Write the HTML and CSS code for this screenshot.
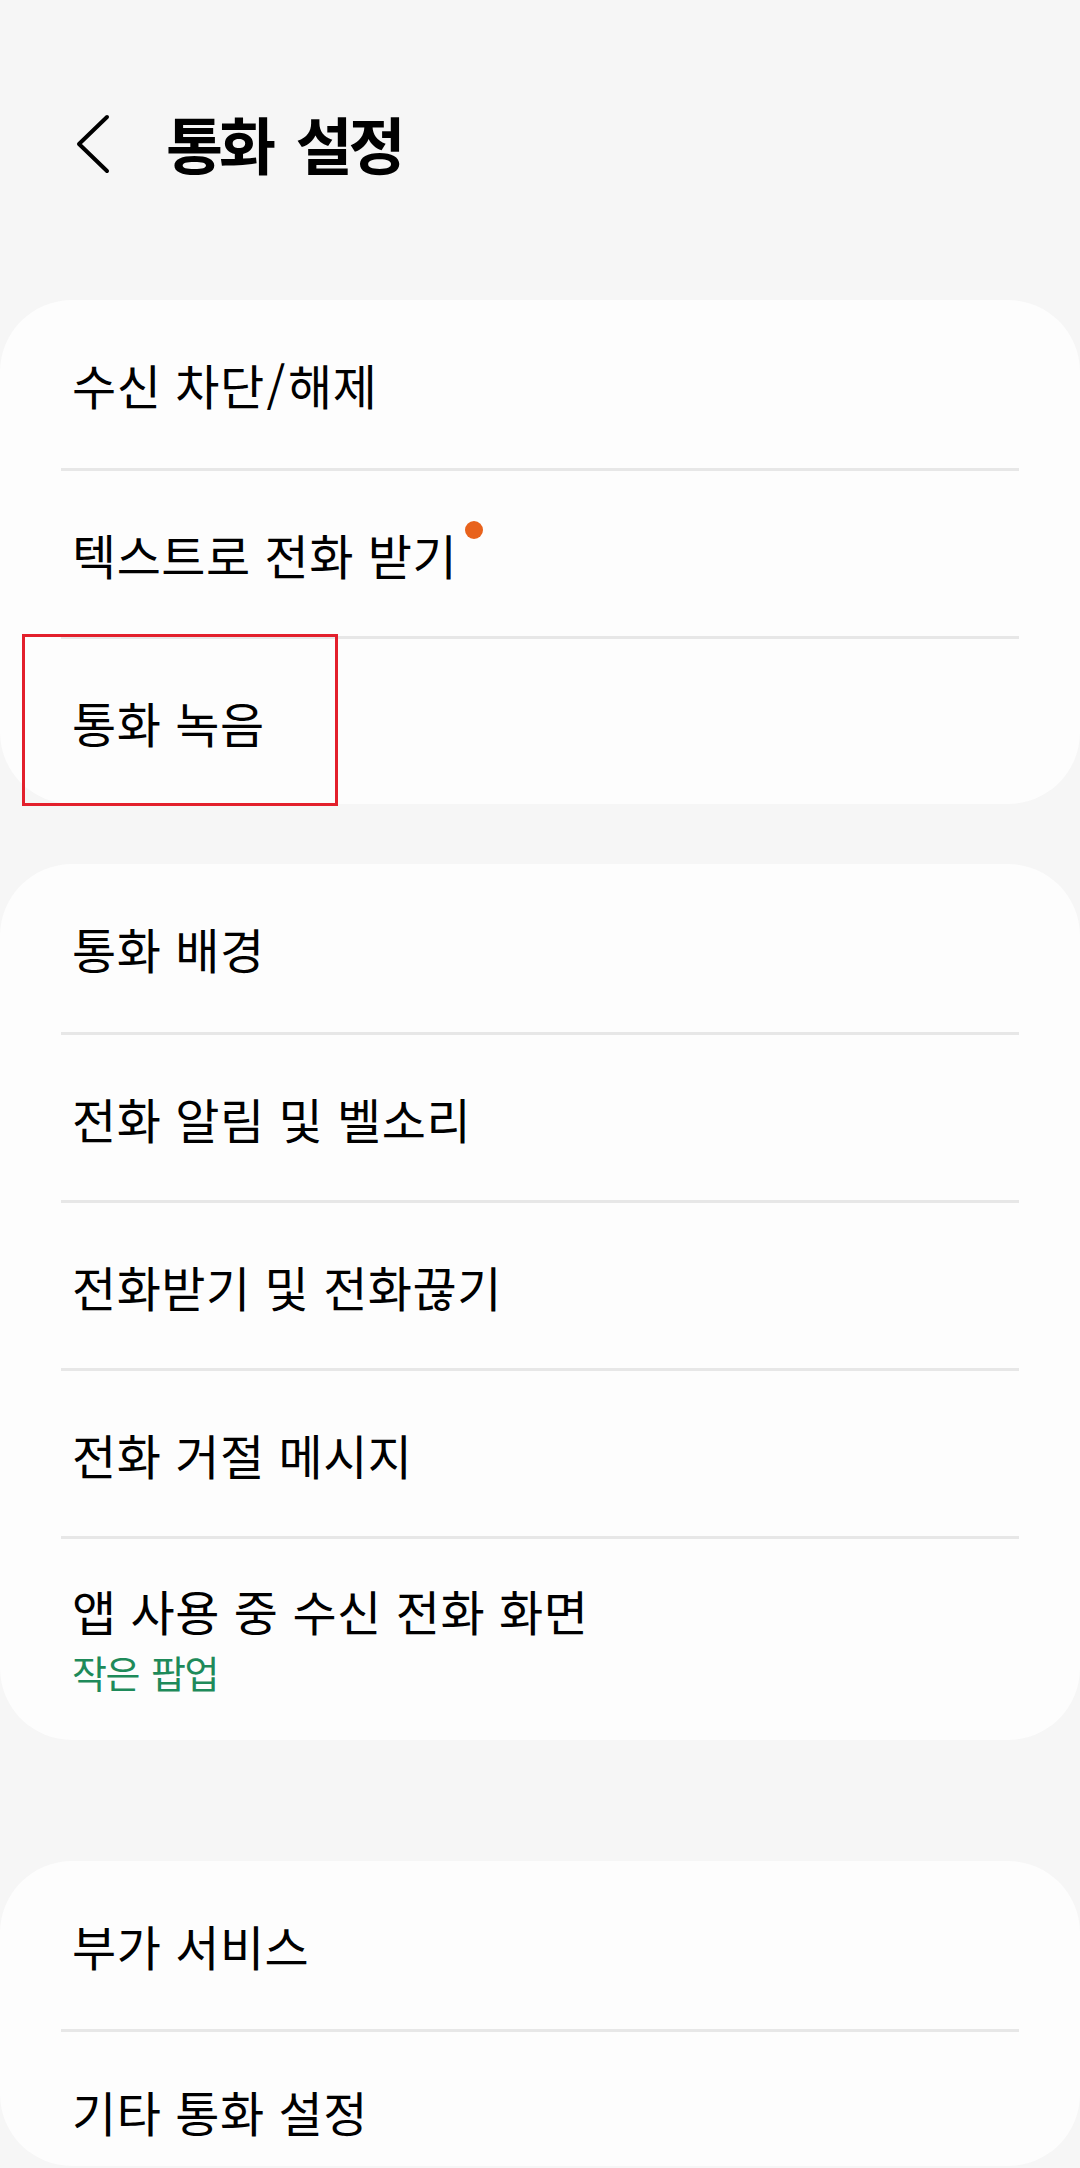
FILE: index.html
```html
<!DOCTYPE html>
<html lang="ko">
<head>
<meta charset="utf-8">
<title>통화 설정</title>
<link rel="stylesheet" href="styles.css">
</head>
<body>
<header class="appbar">
  <svg class="back" width="40" height="64" viewBox="0 0 40 64" aria-hidden="true">
    <polyline points="33,3 5,30 33,57" fill="none" stroke="#000" stroke-width="4" stroke-linecap="round" stroke-linejoin="round"/>
  </svg>
  <h1 class="title">통화 설정</h1>
</header>

<section class="card card-first">
  <div class="row"><span class="label">수신 차단<span class="slash">/</span>해제</span></div>
  <div class="row"><span class="label">텍스트로 전화 받기<span class="dot"></span></span></div>
  <div class="row"><span class="label">통화 녹음</span></div>
  <div class="highlight"></div>
</section>

<section class="card card-second">
  <div class="row"><span class="label">통화 배경</span></div>
  <div class="row"><span class="label">전화 알림 및 벨소리</span></div>
  <div class="row"><span class="label">전화받기 및 전화끊기</span></div>
  <div class="row"><span class="label">전화 거절 메시지</span></div>
  <div class="row row-two">
    <span class="label">앱 사용 중 수신 전화 화면</span>
    <span class="sub">작은 팝업</span>
  </div>
</section>

<section class="card card-third">
  <div class="row"><span class="label">부가 서비스</span></div>
  <div class="row row-last"><span class="label">기타 통화 설정</span></div>
</section>
</body>
</html>
```

FILE: styles.css
```css
html, body {
  margin: 0;
  padding: 0;
  background: #f6f6f6;
}
body {
  width: 1080px;
  height: 2168px;
  overflow: hidden;
  font-family: "Noto Sans CJK KR", "Noto Sans", sans-serif;
  color: #000;
}
.appbar {
  height: 292px;
  margin-bottom: 8px;
  display: flex;
  align-items: center;
}
.back {
  margin-left: 74px;
  flex: none;
}
.title {
  margin: -7px 0 0 52px;
  font-size: 62px;
  line-height: 1;
  font-weight: 700;
  letter-spacing: -4px;
  word-spacing: 10px;
}
.card {
  position: relative;
  background: #fdfdfd;
  border-radius: 72px;
}
.card-second {
  margin-top: 60px;
}
.card-third {
  margin-top: 121px;
}
.row {
  box-sizing: border-box;
  height: 168px;
  margin: 0 61px;
  padding-left: 11px;
  display: flex;
  align-items: center;
}
.row + .row {
  border-top: 3px solid #e7e7e7;
}
.label {
  position: relative;
  font-size: 48px;
  line-height: 1;
  letter-spacing: 0.5px;
  word-spacing: 0;
  white-space: nowrap;
}
.slash {
  margin: 0 2px;
}
.dot {
  position: absolute;
  left: calc(100% + 8px);
  top: -9px;
  width: 18px;
  height: 18px;
  border-radius: 50%;
  background: #e8621c;
}
.row-two {
  height: 204px;
  flex-direction: column;
  align-items: flex-start;
  justify-content: flex-start;
  padding-top: 47px;
}
.sub {
  margin-top: 19px;
  font-size: 38px;
  line-height: 1;
  letter-spacing: -1.5px;
  word-spacing: 3px;
  color: #1e8a5a;
}
.row-last {
  height: 137px;
  align-items: flex-start;
  padding-top: 55px;
}
.highlight {
  position: absolute;
  left: 22px;
  top: 334px;
  width: 316px;
  height: 172px;
  box-sizing: border-box;
  border: 3px solid #e3202c;
}
```
